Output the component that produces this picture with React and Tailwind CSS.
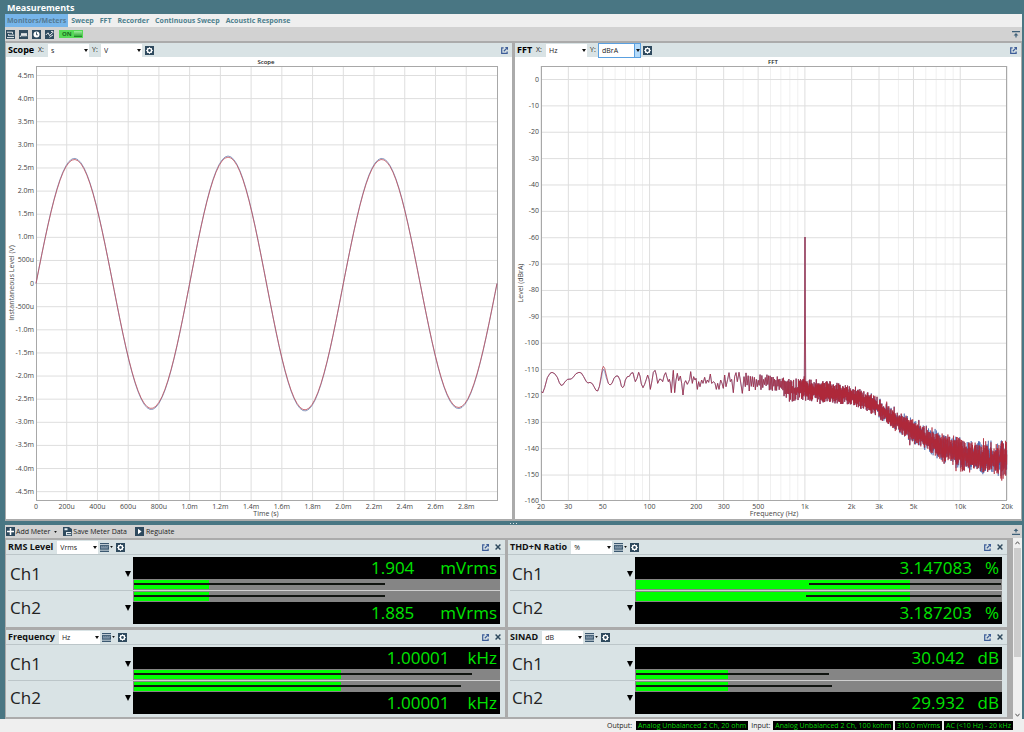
import React from "react";

const SCOPE_Y = ["4.5m", "4.0m", "3.5m", "3.0m", "2.5m", "2.0m", "1.5m", "1.0m", "500u", "0", "-500u", "-1.0m", "-1.5m", "-2.0m", "-2.5m", "-3.0m", "-3.5m", "-4.0m", "-4.5m"];
const SCOPE_X = ["0", "200u", "400u", "600u", "800u", "1.0m", "1.2m", "1.4m", "1.6m", "1.8m", "2.0m", "2.2m", "2.4m", "2.6m", "2.8m"];
const FFT_X = [[20, "20"], [30, "30"], [50, "50"], [100, "100"], [200, "200"], [300, "300"], [500, "500"], [1000, "1k"], [2000, "2k"], [3000, "3k"], [5000, "5k"], [10000, "10k"], [20000, "20k"]];
const FFT_MINOR = [40, 60, 70, 80, 90, 400, 600, 700, 800, 900, 4000, 6000, 7000, 8000, 9000];

/* Low-frequency part of the noise floor, in thirds of a chart unit. */
const LOW = [95,155,98,159,104,143,112,113,120,100,126,97,134,101,142,112,148,128,153,136,158,135,166,124,173,118,184,117,190,111,198,101,207,97,214,99,221,110,229,125,234,129,240,127,247,131,252,140,258,151,263,153,268,140,273,110,277,87,280,79,284,85,289,105,295,130,300,135,306,130,312,115,318,108,324,108,330,120,334,138,338,143,342,138,346,120,352,110,358,109,363,100,369,98,373,115,376,125,381,115,386,97,390,108,394,132,399,143,404,133,409,118,413,105,417,118,421,148,426,122,430,97,435,91,439,105,443,130,449,117,454,119,458,125,463,105,467,98,471,112,475,125,478,118,481,130,484,158,488,110,490,91,494,158,498,120,502,100,506,122,511,108,515,130,519,165,523,130,527,122,532,133,536,125,539,118,542,95,547,130,551,110,555,120,558,115,562,148,566,125,570,140,575,120,579,130,584,112,588,130,592,120,596,127,601,102,605,130,611,125,615,130,619,148,623,130,627,148,632,120,636,130,640,145,644,105,648,140,653,118,657,98,661,125,665,118,670,158,674,110,678,98,682,125,687,97,691,120,697,160,702,110,706,140];

/* x, upper and lower edge of the noise band. */
const BAND = [[231, 315, 333], [249, 317, 333], [262, 319, 334], [276, 321, 346], [290, 322, 344], [315, 324, 346], [336, 329, 348], [359, 337, 358], [376, 351, 370], [389, 357, 380], [409, 369, 393], [429, 378, 404], [446, 382, 412], [462, 386, 415], [480, 388, 417], [492, 388, 417]];

function band(x) {
  let i = 0;
  while (i < BAND.length - 2 && BAND[i + 1][0] < x) i++;
  const [x0, t0, b0] = BAND[i];
  const [x1, t1, b1] = BAND[i + 1];
  const k = (x - x0) / (x1 - x0);
  return [t0 + (t1 - t0) * k, b0 + (b1 - b0) * k];
}

function generator(seed) {
  let s = seed;
  return () => {
    s = (s * 1664525 + 1013904223) % 4294967296;
    return s / 4294967296;
  };
}

/* Both channels share most of their noise; they part towards high frequencies. */
function fftTrace(channel, humShift) {
  const shared = generator(4242);
  const own = generator(91 + channel);
  const pts = [];
  for (let i = 0; i < LOW.length; i += 2) {
    const hum = LOW[i] > 272 && LOW[i] < 290 ? humShift : 0;
    pts.push([LOW[i] / 3 - 5, 283 + LOW[i + 1] / 3 + hum]);
  }
  let spike = false;
  let step = 1.2;
  let side = 1;
  for (let x = 231; x <= 492; x += step) {
    step = Math.max(0.22, 1.1 - (x - 231) * 0.014);
    const [t, b] = band(x);
    side = -side;
    const reach = 0.08 + 0.42 * shared() + (shared() > 0.95 ? 0.14 : 0);
    const stray = (own() - 0.5) * Math.max(0, (x - 340) / 150) * 12;
    pts.push([x, (t + b) / 2 + side * reach * (b - t) + stray]);
    if (!spike && x >= 289) {
      spike = true;
      pts.push([289.3, 330], [290, 180], [290.7, 330]);
    }
  }
  return pts.map((p) => p[0].toFixed(2) + "," + p[1].toFixed(2)).join(" ");
}

function scopeTrace(gain) {
  const amps = [2.69, 2.71, 2.74, 2.74, 2.69, 2.69];
  const pts = [];
  for (let x = 0; x <= 461; x += 3) {
    const ph = x / 76.83;
    const a = amps[Math.min(5, Math.floor(ph))] * gain;
    pts.push(`${30 + x},${(226.5 - Math.sin(ph * Math.PI) * a * 46.25).toFixed(2)}`);
  }
  pts.push("491,226.5");
  return pts.join(" ");
}

const fx = (f) => 26 + (Math.log10(f / 20) / 3) * 466;

function ScopeChart() {
  return (
    <svg viewBox="0 0 506 462" className="block w-full bg-white" role="img" aria-label="Scope" fontSize="7" fill="#444">
      <g stroke="#dedede" strokeWidth="1">
        {SCOPE_X.slice(1).map((t, i) => <line key={t} x1={30 + (i + 1) * 30.73} x2={30 + (i + 1) * 30.73} y1="9" y2="443" />)}
        {SCOPE_Y.map((t, i) => <line key={t} x1="30" x2="491" y1={18.5 + i * 23.12} y2={18.5 + i * 23.12} />)}
      </g>
      <rect x="30.5" y="9.5" width="461" height="434" fill="none" stroke="#a8a8a8" />
      <g textAnchor="end">
        {SCOPE_Y.map((t, i) => <text key={t} x="28" y={20.5 + i * 23.12}>{t}</text>)}
      </g>
      <g textAnchor="middle">
        {SCOPE_X.map((t, i) => <text key={t} x={30 + i * 30.73} y="452">{t}</text>)}
        <text x="260" y="459">Time (s)</text>
        <text x="260" y="7" fontSize="6" fontWeight="600" fill="#222">Scope</text>
        <text transform="translate(8 226) rotate(-90)">Instantaneous Level (V)</text>
      </g>
      <polyline points={scopeTrace(1.006)} fill="none" stroke="#7186b4" strokeWidth="0.8" />
      <polyline points={scopeTrace(0.997)} fill="none" stroke="#c0505c" strokeWidth="0.8" />
    </svg>
  );
}

function FftChart() {
  return (
    <svg viewBox="0 0 506 462" className="block w-full bg-white" role="img" aria-label="FFT" fontSize="7" fill="#444">
      <g stroke="#f0f0f0">
        {FFT_MINOR.map((f) => <line key={f} x1={fx(f)} x2={fx(f)} y1="9" y2="443" />)}
      </g>
      <g stroke="#dedede">
        {FFT_X.map(([f]) => <line key={f} x1={fx(f)} x2={fx(f)} y1="9" y2="443" />)}
        {Array.from({ length: 16 }, (_, i) => <line key={i} x1="26" x2="492" y1={22.5 + i * 26.37} y2={22.5 + i * 26.37} />)}
      </g>
      <rect x="26.5" y="9.5" width="465" height="434" fill="none" stroke="#a8a8a8" />
      <g textAnchor="end">
        {Array.from({ length: 17 }, (_, i) => <text key={i} x="24" y={24.5 + i * 26.37}>{i ? -10 * i : 0}</text>)}
      </g>
      <g textAnchor="middle">
        {FFT_X.map(([f, t]) => <text key={t} x={fx(f)} y="452">{t}</text>)}
        <text x="259" y="459">Frequency (Hz)</text>
        <text x="258" y="7" fontSize="6" fontWeight="600" fill="#222">FFT</text>
        <text transform="translate(8 226) rotate(-90)">Level (dBrA)</text>
      </g>
      <polyline points={fftTrace(1, 3)} fill="none" stroke="#3d5aa8" strokeWidth="0.6" />
      <polyline points={fftTrace(2, 0)} fill="none" stroke="#b0283a" strokeWidth="0.7" />
    </svg>
  );
}

function Picker({ label, value, options, className, active }) {
  return (
    <span className={"relative flex h-[13px] items-center bg-white " + className + (active ? " outline outline-1 outline-[#5aa0e0]" : "")}>
      <select aria-label={label} defaultValue={value} className="h-full w-full appearance-none bg-transparent pl-[3px] text-[7px] leading-[13px] text-[#222]">
        {options.map((o) => <option key={o}>{o}</option>)}
      </select>
      <span className={"pointer-events-none absolute inset-y-0 right-0 flex w-[6px] items-center justify-center " + (active ? "border-l border-[#5aa0e0] bg-[#b5dbfa]" : "")}>
        <svg viewBox="0 0 4 3" className="h-[3px] w-[4px]" fill="#111"><path d="M0 0h4L2 3z" /></svg>
      </span>
    </span>
  );
}

function Gear() {
  return (
    <svg viewBox="0 0 10 10" className="size-[9px]">
      <rect width="10" height="10" fill="#2f4a5e" />
      <circle cx="5" cy="5" r="2.3" fill="none" stroke="#fff" strokeWidth="1.5" />
      <path d="M5 1.3v1.4M5 7.3v1.4M1.3 5h1.4M7.3 5h1.4M2.4 2.4l1 1M6.6 6.6l1 1M7.6 2.4l-1 1M3.4 6.6l-1 1" stroke="#fff" strokeWidth="1" />
    </svg>
  );
}

function PopOut() {
  return (
    <svg viewBox="0 0 8 8" className="size-[7px]" fill="none" stroke="#3c5c98" strokeWidth="1.4">
      <path d="M3 1H.8v6.2H7V5" /><path d="M3.2 4.8 6.5 1.5" /><path d="M4.4 0H8v3.6z" fill="#3c5c98" stroke="none" />
    </svg>
  );
}

function Close() {
  return (
    <svg viewBox="0 0 7 7" className="size-[6px]" fill="none" stroke="#2f4a5e" strokeWidth="1.7"><path d="m.7.7 5.6 5.6M6.3.7.7 6.3" /></svg>
  );
}

function MeterStyle() {
  return (
    <span className="flex items-center gap-px">
      <svg viewBox="0 0 9 9" className="size-[9px]">
        <path d="M0 0h9v9H0z" fill="#3b5870" /><path d="M0 1.6h9M0 7.2h9" stroke="#dbe5ea" strokeWidth=".9" />
        <path d="M1.3 5.6V3.6h1v2M3.3 5.6v-2h1v2M5.3 5.6v-2h1v2M7.3 5.6v-2h1" fill="none" stroke="#b4c5d0" strokeWidth=".6" />
      </svg>
      <svg viewBox="0 0 4 3" className="h-[2px] w-[3px]" fill="#111"><path d="M0 0h4L2 3z" /></svg>
    </span>
  );
}

function GraphPanel({ title, titleClass, x, y, yActive, children }) {
  return (
    <section className="min-w-0 flex-1 bg-white">
      <header className="flex h-[14px] items-center bg-[#d9e3e5] pl-[2px] pr-1">
        <h2 className={"shrink-0 whitespace-nowrap text-[9px] font-bold leading-[14px] text-black " + titleClass}>{title}</h2>
        <span className="w-[10px] text-[7px]">X:</span>
        <Picker label={title + " X unit"} value={x} options={[x]} className="w-[41px]" />
        <span className="w-[12px] pl-[3px] text-[7px]">Y:</span>
        <Picker label={title + " Y unit"} value={y} options={[y]} className="w-[41px]" active={yActive} />
        <button aria-label={title + " settings"} className="ml-[3px]"><Gear /></button>
        <button aria-label={"Undock " + title} className="ml-auto"><PopOut /></button>
      </header>
      {children}
    </section>
  );
}

function Bar({ level, from, to }) {
  return (
    <div className="h-[11px] bg-[#858585] p-px">
      <div className="relative h-[9px]">
        <div className="h-full bg-[#00ff00]" style={{ width: level + "%" }} />
        <div className="absolute top-[3px] h-[2px] bg-[#101410]" style={{ left: from + "%", width: to - from + "%" }} />
      </div>
    </div>
  );
}

function Reading({ value, unit }) {
  return (
    <div className="flex h-[22px] items-center justify-end bg-black pr-[3px] text-[17px] leading-[22px] text-[#00e400]">
      <span>{value}</span>
      <span className={unit === "mVrms" ? "ml-[26px]" : unit === "kHz" ? "ml-[18px]" : "ml-[13px]"}>{unit}</span>
    </div>
  );
}

function Meter({ title, unit, values, scale, level, lines }) {
  return (
    <section className="bg-[#d9e3e5] pb-[3px]">
      <header className="flex h-[15px] items-center border-b border-[#bcc6c9] pl-[2px] pr-[4px]">
        <h3 className="mr-1 whitespace-nowrap text-[9px] font-bold leading-[14px] text-[#111]">{title}</h3>
        <Picker label={title + " unit"} value={unit} options={[unit]} className="w-[41px]" />
        <button aria-label={title + " meter style"} className="ml-[2px]"><MeterStyle /></button>
        <button aria-label={title + " settings"} className="ml-[3px]"><Gear /></button>
        <button aria-label={"Undock " + title} className="ml-auto"><PopOut /></button>
        <button aria-label={"Close " + title} className="ml-[6px]"><Close /></button>
      </header>
      <div className="flex pl-[2px] pr-[5px] pt-[2px]">
        <div className="flex w-[125px] shrink-0 flex-col">
          {["Ch1", "Ch2"].map((c, i) => (
            <div key={c} className={"flex flex-1 items-center justify-between pl-[2px] pr-[2px] text-[17px] leading-[20px] text-[#222] " + (i ? "" : "border-b border-[#bcc6c9]")}>
              <span>{c}</span>
              <svg viewBox="0 0 6 6" className="size-[6px]" fill="#000"><path d="M0 0h6L3 6z" /></svg>
            </div>
          ))}
        </div>
        <div className="min-w-0 flex-1">
          <Reading value={values[0]} unit={scale} />
          <Bar level={level} from={lines[0][0]} to={lines[0][1]} />
          <div className="h-px bg-[#d0d0d0]" />
          <Bar level={level} from={lines[1][0]} to={lines[1][1]} />
          <Reading value={values[1]} unit={scale} />
        </div>
      </div>
    </section>
  );
}

const TABS = ["Monitors/Meters", "Sweep", "FFT", "Recorder", "Continuous Sweep", "Acoustic Response"];

const TOOLS = [
  ["Signal path", <path key="p" d="M1 2.2h5.5v1.6M2.5 5.5V4.2M2.5 5.2h5.7M1 7.6h7" />],
  ["Bench mode", <path key="p" d="M.8 6.3h1.3L3 3l1 3.3L5 3l1 3.3L7 3l.8 3.3" />],
  ["Clock", <g key="p"><circle cx="4.5" cy="4.5" r="3" fill="#fff" stroke="none" /><path d="M4.5 2.3v2.5h1.4" stroke="#2f4a5e" strokeWidth=".9" /></g>],
  ["Graph", <path key="p" d="M.8 5 3 2.8l1.6 2.8L7 3M4.5 7.3l3.4-2.2M6 1.4h1.8v1.8" />],
];

function StatusValue({ children }) {
  return <span className="bg-black px-[2px] text-[#00d800]">{children}</span>;
}

export default function App() {
  return (
    <div className="flex min-h-screen flex-col bg-[#efefef] font-['Open_Sans','Noto_Sans',sans-serif] text-[#222]">
      <div className="bg-[#497683] pl-[5px] pr-[2px]">
        <h1 className="h-[14px] pl-[2px] text-[9px] font-bold leading-[15px] text-white">Measurements</h1>
        <nav className="flex h-[13px] items-center bg-[#efefef] text-[7px] font-bold leading-[13px] text-[#4d7f8d]">
          {TABS.map((t, i) => (
            <a key={t} href="#" className={i ? "ml-[3px] mr-[3px] whitespace-nowrap" : "whitespace-nowrap bg-[#76b5ea] px-[2px] text-[#557a92]"}>{t}</a>
          ))}
        </nav>
        <div className="flex h-[14px] items-center gap-1 bg-[#d2d2d2] px-[1px]">
          {TOOLS.map(([name, art]) => (
            <button key={name} aria-label={name}>
              <svg viewBox="0 0 9 9" className="size-[9px]" fill="none" stroke="#fff" strokeWidth="0.9">
                <rect width="9" height="9" fill="#2f4a5e" stroke="none" />
                {art}
              </svg>
            </button>
          ))}
          <button className="ml-[1px] flex h-[8px] w-[24px] items-center justify-between bg-[#56da56] pl-[3px] pr-[1px] text-[6px] font-bold leading-[8px] text-[#176a20]">
            ON<span className="h-[6px] w-[8px] border-b border-[#208a28] bg-gradient-to-b from-[#9cf09c] to-[#35ab3c]" />
          </button>
          <button aria-label="Collapse graphs" className="ml-auto mr-px">
            <svg viewBox="0 0 8 7" className="h-[7px] w-[8px]" fill="#3f6078"><path d="M0 0h8v1.2H0zM1.6 4.6 4 2l2.4 2.6zM3.4 4h1.2v2.4H3.4z" /></svg>
          </button>
        </div>
        <div className="flex gap-[3px] bg-[#ababab] px-px pb-[2px] pt-[2px]">
          <GraphPanel title="Scope" titleClass="w-[30px]" x="s" y="V"><ScopeChart /></GraphPanel>
          <GraphPanel title="FFT" titleClass="w-[19px]" x="Hz" y="dBrA" yActive><FftChart /></GraphPanel>
        </div>
        <div className="flex h-[4px] items-center justify-center gap-[2px]">
          {[0, 1, 2].map((i) => <span key={i} className="size-px bg-white/80" />)}
        </div>
        <div className="flex h-[13px] items-center bg-[#d2d2d2] pl-px text-[7px] leading-[13px]">
          <button className="flex items-center gap-[1px]">
            <svg viewBox="0 0 9 9" className="size-[9px]"><rect width="9" height="9" fill="#2f4a5e" /><path d="M4.5 1v7M1 4.5h7" stroke="#fff" strokeWidth="1.5" /></svg>
            Add Meter
            <svg viewBox="0 0 4 3" className="ml-[3px] h-[2px] w-[3px]" fill="#111"><path d="M0 0h4L2 3z" /></svg>
          </button>
          <button className="ml-[6px] flex items-center gap-[1px]">
            <svg viewBox="0 0 9 9" className="size-[9px]"><path d="M0 0h6l3 2v7H0z" fill="#2f4a5e" /><path d="M1.5 1.2h3v2h-3zM3 5h5.2v3.3H3z" fill="#e6eef2" /><path d="M4 6.6h4M6.6 3.5 8.5 5" stroke="#2f4a5e" /></svg>
            Save Meter Data
          </button>
          <button className="ml-[8px] flex items-center gap-[2px]">
            <svg viewBox="0 0 9 9" className="size-[9px]"><rect width="9" height="9" fill="#2f4a5e" /><path d="M3 1.8v5.4l3.6-2.7z" fill="#fff" /></svg>
            Regulate
          </button>
          <button aria-label="Collapse meters" className="ml-auto mr-[2px]">
            <svg viewBox="0 0 8 7" className="h-[7px] w-[8px]" fill="#3f6078"><path d="M0 5.8h8V7H0zM1.6 3 4 .5 6.4 3zM3.4 2.4h1.2v2.2H3.4z" /></svg>
          </button>
        </div>
        <div className="flex gap-[6px] bg-[#ababab] pl-px">
          <main className="grid flex-1 grid-cols-2 gap-[3px] pb-[2px] pt-[2px]">
            <Meter title="RMS Level" unit="Vrms" values={["1.904", "1.885"]} scale="mVrms" level={20.5} lines={[[0, 68.7], [0, 68.7]]} />
            <Meter title="THD+N Ratio" unit="%" values={["3.147083", "3.187203"]} scale="%" level={75.2} lines={[[47.3, 100], [46.5, 100]]} />
            <Meter title="Frequency" unit="Hz" values={["1.00001", "1.00001"]} scale="kHz" level={56.8} lines={[[0, 92.6], [0, 89.6]]} />
            <Meter title="SINAD" unit="dB" values={["30.042", "29.932"]} scale="dB" level={25.2} lines={[[0, 53], [0, 53.8]]} />
          </main>
          <div className="flex w-[9px] flex-col items-center bg-[#f0f0f0]">
            <svg viewBox="0 0 6 4" className="my-[3px] h-[4px] w-[5px]" fill="none" stroke="#555" strokeWidth="1.2"><path d="m.5 3.5 2.5-3 2.5 3" /></svg>
            <div className="h-3/5 w-[7px] bg-[#cdcdcd]" />
            <svg viewBox="0 0 6 4" className="mb-[2px] mt-auto h-[4px] w-[5px]" fill="none" stroke="#555" strokeWidth="1.2"><path d="m.5.5 2.5 3 2.5-3" /></svg>
          </div>
        </div>
      </div>
      <footer className="flex items-center justify-end gap-[2px] pr-[11px] pt-[2px] text-[7px] leading-[9px]">
        <span className="mr-[2px]">Output:</span>
        <StatusValue>Analog Unbalanced 2 Ch, 20 ohm</StatusValue>
        <span className="mx-[1px]">Input:</span>
        <StatusValue>Analog Unbalanced 2 Ch, 100 kohm</StatusValue>
        <StatusValue>310.0 mVrms</StatusValue>
        <StatusValue>AC (&lt;10 Hz) - 20 kHz</StatusValue>
      </footer>
    </div>
  );
}
